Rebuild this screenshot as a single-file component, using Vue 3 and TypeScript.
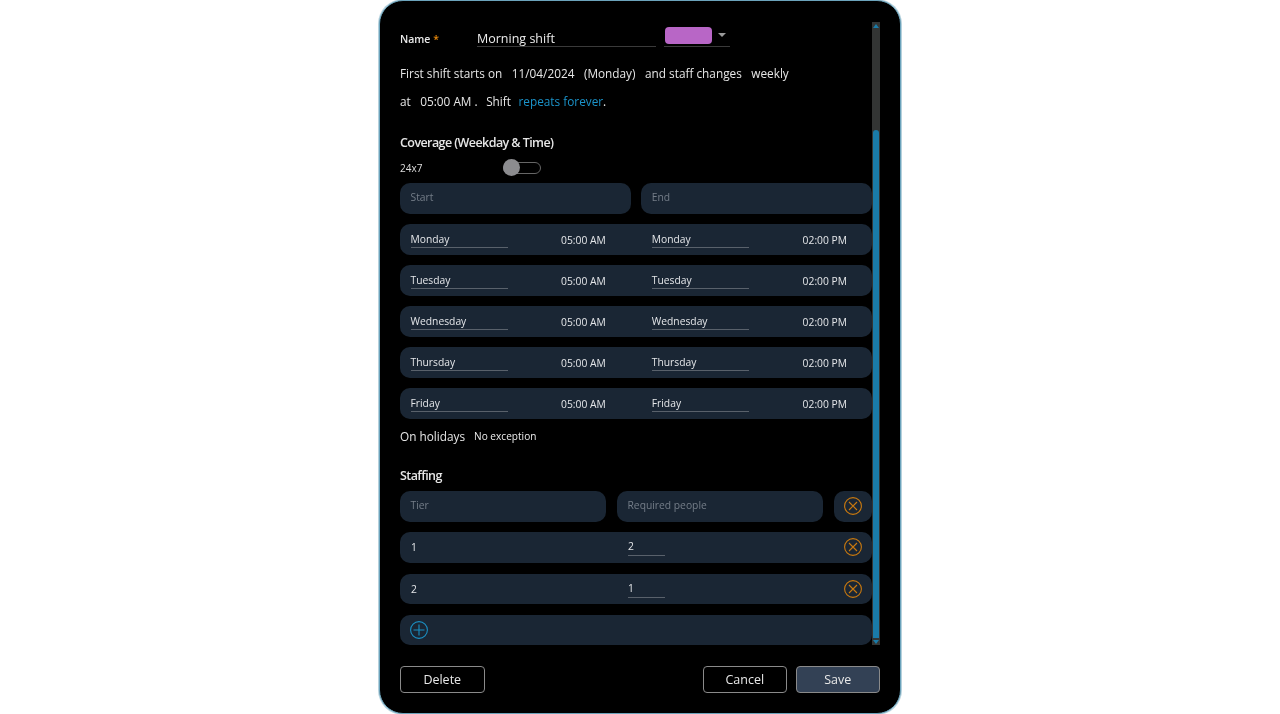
<script setup lang="ts">
const days: string[] = ['Monday', 'Tuesday', 'Wednesday', 'Thursday', 'Friday']
const tiers: { tier: string; people: string }[] = [
  { tier: '1', people: '2' },
  { tier: '2', people: '1' },
]
</script>

<template>
  <div class="page">
    <div class="panel">
      <div class="scroll-area">
        <div class="content">
          <div class="name-row">
            <span class="name-label">Name <span class="req">*</span></span>
            <span class="name-input">Morning shift</span>
            <span class="color-pick">
              <span class="swatch"></span>
              <span class="caret"></span>
            </span>
          </div>
          <div class="sentence first">
            <span>First shift starts on</span><span>11/04/2024</span><span>(Monday)</span><span>and staff changes</span><span>weekly</span>
          </div>
          <div class="sentence second">
            <span>at</span><span>05:00 AM .</span><span class="shift">Shift</span><span class="repeat"><a class="link">repeats forever</a>.</span>
          </div>

          <h3 class="heading coverage">Coverage (Weekday &amp; Time)</h3>
          <div class="toggle-row">
            <span class="small">24x7</span>
            <span class="toggle"><span class="knob"></span></span>
          </div>

          <div class="two-col">
            <div class="field">Start</div>
            <div class="field">End</div>
          </div>
          <div v-for="d in days" :key="d" class="two-col day-row">
            <div class="day-cell">
              <span class="day-select">{{ d }}</span>
              <span class="time">05:00 AM</span>
            </div>
            <div class="day-cell">
              <span class="day-select">{{ d }}</span>
              <span class="time">02:00 PM</span>
            </div>
          </div>

          <div class="holiday">
            <span class="holiday-label">On holidays</span>
            <span class="holiday-value">No exception</span>
          </div>

          <h3 class="heading staffing">Staffing</h3>
          <div class="staff-grid">
            <div class="field">Tier</div>
            <div class="field">Required people</div>
            <div class="field icon-cell">
              <svg class="icon" viewBox="0 0 20 20"><circle cx="10" cy="10" r="8.4" /><path d="M6 6l8 8M14 6l-8 8" /></svg>
            </div>
          </div>
          <div v-for="t in tiers" :key="t.tier" class="staff-row">
            <span class="tier">{{ t.tier }}</span>
            <span class="people">{{ t.people }}</span>
            <svg class="icon" viewBox="0 0 20 20"><circle cx="10" cy="10" r="8.4" /><path d="M6 6l8 8M14 6l-8 8" /></svg>
          </div>
          <div class="add-row">
            <svg class="icon plus" viewBox="0 0 20 20"><circle cx="10" cy="10" r="8.4" /><path d="M10 4.5v11M4.5 10h11" /></svg>
          </div>
        </div>
        <div class="scrollbar">
          <span class="arrow up"></span>
          <span class="thumb"></span>
          <span class="arrow down"></span>
        </div>
      </div>
      <div class="actions">
        <button class="btn">Delete</button>
        <span class="spacer"></span>
        <button class="btn">Cancel</button>
        <button class="btn save">Save</button>
      </div>
    </div>
  </div>
</template>

<style>
html, body { margin: 0; background: #fff; }
</style>

<style scoped>
.page {
  width: 1280px;
  height: 714px;
  display: flex;
  justify-content: center;
  background: #fff;
  font-family: "Open Sans", "Noto Sans", sans-serif;
  color: #e8e8e8;
  overflow: hidden;
}
.panel {
  box-sizing: border-box;
  width: 522px;
  height: 714px;
  background: #000;
  border: 1px solid #6ba3bb;
  box-shadow: 0 0 0 1px rgba(107, 163, 187, 0.5);
  border-radius: 24px;
  padding: 21px 20px 0 20px;
  display: flex;
  flex-direction: column;
  will-change: transform;
}
.scroll-area { display: flex; height: 623px; }
.content { width: 472px; flex: none; }
.name-row { display: flex; align-items: flex-start; height: 25px; }
.name-label { width: 77px; margin-top: 7px; font-size: 10.5px; font-weight: 600; line-height: 20px; }
.req { color: #e8890c; }
.name-input {
  box-sizing: border-box;
  width: 179px;
  height: 25px;
  padding-top: 8px;
  line-height: 17px;
  font-size: 12.5px;
  border-bottom: 1px solid #3a3a3a;
  color: #ececec;
}
.color-pick {
  box-sizing: border-box;
  width: 66px;
  height: 25px;
  margin-left: 8px;
  display: flex;
  align-items: flex-start;
  border-bottom: 1px solid #3a3a3a;
}
.swatch { width: 47px; height: 17px; border-radius: 4px; background: #b866c6; margin-top: 5px; margin-left: 1px; }
.caret {
  width: 0;
  height: 0;
  margin: 11px 0 0 6px;
  border-left: 4px solid transparent;
  border-right: 4px solid transparent;
  border-top: 4px solid #9a9a9a;
}
.sentence { display: flex; gap: 9.5px; font-size: 11.8px; line-height: 20px; color: #e6e6e6; }
.first { margin-top: 15.5px; }
.second { margin-top: 8px; }
.shift { margin-left: -1px; }
.repeat { margin-left: -2px; }
.link { color: #1b93c9; }
.heading { margin: 0; font-size: 12.5px; line-height: 20px; font-weight: 600; color: #e6e6e6; letter-spacing: -0.58px; }
.coverage { margin-top: 22px; }
.toggle-row { display: flex; align-items: center; height: 20px; margin-top: 5.5px; }
.small { width: 103px; font-size: 10px; color: #dedede; }
.toggle {
  box-sizing: border-box;
  position: relative;
  width: 38px;
  height: 12px;
  border: 1px solid #666;
  border-radius: 6px;
}
.knob {
  position: absolute;
  left: -1px;
  top: -4px;
  width: 17px;
  height: 17px;
  border-radius: 50%;
  background: #8c8c8f;
}
.two-col { display: grid; grid-template-columns: 230.75px 230.75px; column-gap: 10.5px; margin-top: 5px; }
.field {
  box-sizing: border-box;
  height: 30.5px;
  border-radius: 10px;
  background: #1a2634;
  padding: 5px 10px 5px 10.5px;
  font-size: 10.3px;
  line-height: 18px;
  color: #747d88;
}
.day-row { margin-top: 10.5px; background: #1a2634; border-radius: 10px; height: 30.5px; }
.day-cell { display: flex; align-items: center; justify-content: space-between; padding: 0 25px 0 10.5px; height: 30.5px; }
.day-select {
  box-sizing: border-box;
  width: 97.5px;
  height: 17px;
  font-size: 10.3px;
  line-height: 16px;
  color: #e4e6e9;
  border-bottom: 1px solid #59616b;
}
.time { font-size: 10.3px; color: #e4e6e9; margin-top: 1px; }
.holiday { display: flex; align-items: center; gap: 9px; height: 20px; margin-top: 7.5px; }
.holiday-label { font-size: 11.8px; color: #e6e6e6; }
.holiday-value { font-size: 10.1px; color: #ececec; }
.staffing { margin-top: 19.5px; }
.staff-grid { display: grid; grid-template-columns: 206px 206px 38px; gap: 11px; margin-top: 5.5px; }
.icon-cell { display: flex; align-items: center; justify-content: flex-end; padding: 0 9px 0 0; }
.icon { width: 20px; height: 20px; flex: none; fill: none; stroke: #c9790f; stroke-width: 1.1; }
.plus { stroke: #1b8fc2; }
.staff-row {
  box-sizing: border-box;
  display: flex;
  align-items: center;
  height: 30.5px;
  margin-top: 10.5px;
  padding: 0 9px 0 11px;
  border-radius: 10px;
  background: #1a2634;
  font-size: 10.3px;
  color: #e4e6e9;
}
.staff-row + .staff-row { margin-top: 11px; }
.tier { width: 217px; }
.people {
  box-sizing: border-box;
  width: 37px;
  height: 18px;
  line-height: 17px;
  margin-right: auto;
  border-bottom: 1px solid #59616b;
}
.add-row {
  box-sizing: border-box;
  display: flex;
  align-items: center;
  height: 30px;
  margin-top: 11px;
  padding-left: 9px;
  border-radius: 10px;
  background: #1a2634;
}
.scrollbar {
  position: relative;
  width: 8px;
  height: 623px;
  flex: none;
  background: #333534;
}
.thumb {
  position: absolute;
  left: 1px;
  right: 1px;
  top: 108px;
  bottom: 7px;
  background: #1a7ba8;
  border-radius: 3px 3px 0 0;
}
.arrow { position: absolute; left: 1px; width: 0; height: 0; border-left: 3px solid transparent; border-right: 3px solid transparent; }
.up { top: 2px; border-bottom: 4px solid #1a7ba8; }
.down { bottom: 1px; border-top: 4px solid #1a7ba8; }
.actions { display: flex; gap: 8.5px; margin-top: 21px; }
.spacer { flex: 1; }
.btn {
  box-sizing: border-box;
  width: 84.5px;
  height: 27px;
  border: 1px solid #8a8a8a;
  border-radius: 4px;
  background: #000;
  color: #e8e8e8;
  font-family: inherit;
  font-size: 12.5px;
  padding: 0;
}
.save { background: #334155; }
</style>
